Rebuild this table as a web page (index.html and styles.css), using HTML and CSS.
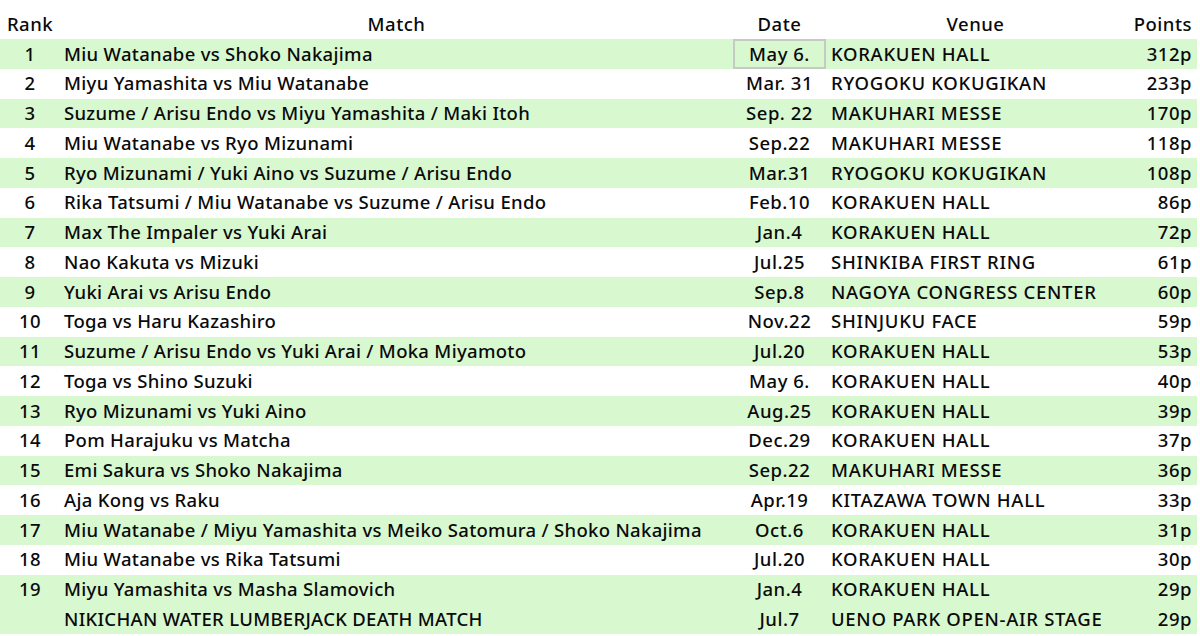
FILE: index.html
```html
<!DOCTYPE html>
<html lang="en">
<head>
<meta charset="utf-8">
<title>Match Ranking</title>
<link rel="stylesheet" href="styles.css">
</head>
<body>
<table class="rank-table">
  <colgroup>
    <col class="c-rank"><col class="c-match"><col class="c-date"><col class="c-venue"><col class="c-points">
  </colgroup>
  <thead>
    <tr>
      <th class="rank">Rank</th>
      <th class="match-h">Match</th>
      <th class="date">Date</th>
      <th class="venue-h">Venue</th>
      <th class="points">Points</th>
    </tr>
  </thead>
  <tbody>
    <tr class="g"><td class="rank">1</td><td class="match">Miu Watanabe vs Shoko Nakajima</td><td class="date sel">May 6.</td><td class="venue">KORAKUEN HALL</td><td class="points">312p</td></tr>
    <tr><td class="rank">2</td><td class="match">Miyu Yamashita vs Miu Watanabe</td><td class="date">Mar. 31</td><td class="venue">RYOGOKU KOKUGIKAN</td><td class="points">233p</td></tr>
    <tr class="g"><td class="rank">3</td><td class="match">Suzume / Arisu Endo vs Miyu Yamashita / Maki Itoh</td><td class="date">Sep. 22</td><td class="venue">MAKUHARI MESSE</td><td class="points">170p</td></tr>
    <tr><td class="rank">4</td><td class="match">Miu Watanabe vs Ryo Mizunami</td><td class="date">Sep.22</td><td class="venue">MAKUHARI MESSE</td><td class="points">118p</td></tr>
    <tr class="g"><td class="rank">5</td><td class="match">Ryo Mizunami / Yuki Aino vs Suzume / Arisu Endo</td><td class="date">Mar.31</td><td class="venue">RYOGOKU KOKUGIKAN</td><td class="points">108p</td></tr>
    <tr><td class="rank">6</td><td class="match">Rika Tatsumi / Miu Watanabe vs Suzume / Arisu Endo</td><td class="date">Feb.10</td><td class="venue">KORAKUEN HALL</td><td class="points">86p</td></tr>
    <tr class="g"><td class="rank">7</td><td class="match">Max The Impaler vs Yuki Arai</td><td class="date">Jan.4</td><td class="venue">KORAKUEN HALL</td><td class="points">72p</td></tr>
    <tr><td class="rank">8</td><td class="match">Nao Kakuta vs Mizuki</td><td class="date">Jul.25</td><td class="venue">SHINKIBA FIRST RING</td><td class="points">61p</td></tr>
    <tr class="g"><td class="rank">9</td><td class="match">Yuki Arai vs Arisu Endo</td><td class="date">Sep.8</td><td class="venue">NAGOYA CONGRESS CENTER</td><td class="points">60p</td></tr>
    <tr><td class="rank">10</td><td class="match">Toga vs Haru Kazashiro</td><td class="date">Nov.22</td><td class="venue">SHINJUKU FACE</td><td class="points">59p</td></tr>
    <tr class="g"><td class="rank">11</td><td class="match">Suzume / Arisu Endo vs Yuki Arai / Moka Miyamoto</td><td class="date">Jul.20</td><td class="venue">KORAKUEN HALL</td><td class="points">53p</td></tr>
    <tr><td class="rank">12</td><td class="match">Toga vs Shino Suzuki</td><td class="date">May 6.</td><td class="venue">KORAKUEN HALL</td><td class="points">40p</td></tr>
    <tr class="g"><td class="rank">13</td><td class="match">Ryo Mizunami vs Yuki Aino</td><td class="date">Aug.25</td><td class="venue">KORAKUEN HALL</td><td class="points">39p</td></tr>
    <tr><td class="rank">14</td><td class="match">Pom Harajuku vs Matcha</td><td class="date">Dec.29</td><td class="venue">KORAKUEN HALL</td><td class="points">37p</td></tr>
    <tr class="g"><td class="rank">15</td><td class="match">Emi Sakura vs Shoko Nakajima</td><td class="date">Sep.22</td><td class="venue">MAKUHARI MESSE</td><td class="points">36p</td></tr>
    <tr><td class="rank">16</td><td class="match">Aja Kong vs Raku</td><td class="date">Apr.19</td><td class="venue">KITAZAWA TOWN HALL</td><td class="points">33p</td></tr>
    <tr class="g"><td class="rank">17</td><td class="match">Miu Watanabe / Miyu Yamashita vs Meiko Satomura / Shoko Nakajima</td><td class="date">Oct.6</td><td class="venue">KORAKUEN HALL</td><td class="points">31p</td></tr>
    <tr><td class="rank">18</td><td class="match">Miu Watanabe vs Rika Tatsumi</td><td class="date">Jul.20</td><td class="venue">KORAKUEN HALL</td><td class="points">30p</td></tr>
    <tr class="g"><td class="rank">19</td><td class="match">Miyu Yamashita vs Masha Slamovich</td><td class="date">Jan.4</td><td class="venue">KORAKUEN HALL</td><td class="points">29p</td></tr>
    <tr class="g"><td class="rank"></td><td class="match">NIKICHAN WATER LUMBERJACK DEATH MATCH</td><td class="date">Jul.7</td><td class="venue">UENO PARK OPEN-AIR STAGE</td><td class="points">29p</td></tr>
  </tbody>
</table>
</body>
</html>
```

FILE: styles.css
```css
html, body {
  margin: 0;
  padding: 0;
  background: #ffffff;
}

body {
  padding-top: 9.25px;
  font-family: "Noto Sans", "Noto Sans CJK JP", sans-serif;
  font-size: 18.5px;
  font-weight: 500;
  letter-spacing: 0.5px;
  color: #0a0a0a;
}

.rank-table {
  border-collapse: collapse;
  table-layout: fixed;
  width: 1197px;
}

.c-rank { width: 60px; }
.c-match { width: 673px; }
.c-date { width: 93px; }
.c-venue { width: 299px; }
.c-points { width: 72px; }

.rank-table th,
.rank-table td {
  height: 29.75px;
  padding: 0;
  font-weight: 500;
  white-space: nowrap;
  overflow: visible;
  vertical-align: middle;
  line-height: 1;
}

.rank-table tr.g td {
  background: #d8f8d0;
}

.rank { text-align: center; }
.match-h { text-align: center; }
.match { text-align: left; padding-left: 4px !important; letter-spacing: 0.3px; }
.date { text-align: center; }
.venue-h { text-align: center; }
.venue { text-align: left; padding-left: 5px !important; letter-spacing: 0.7px; }
.points { text-align: right; padding-right: 5px !important; }

.rank-table td.sel {
  box-shadow: inset 0 0 0 2px #c4cbc4;
}
```
